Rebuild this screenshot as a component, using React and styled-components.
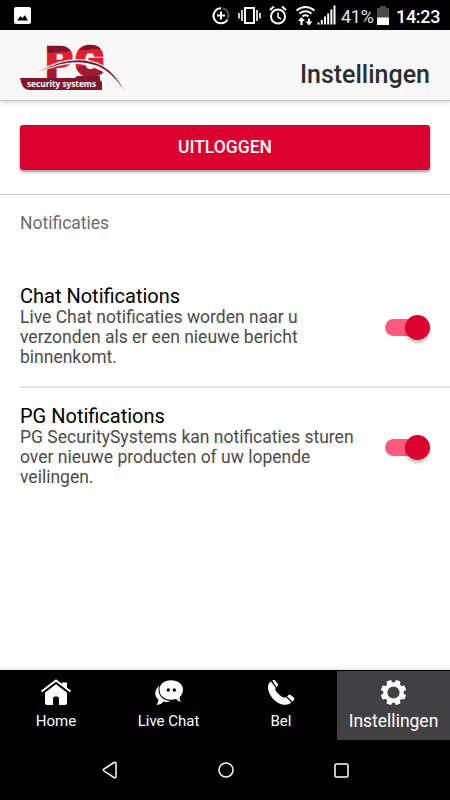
import { useState } from 'react';
import styled, { createGlobalStyle } from 'styled-components';

const GlobalStyle = createGlobalStyle`
  * {
    box-sizing: border-box;
  }

  body {
    margin: 0;
    background: #fff;
    font-family: Roboto, sans-serif;
  }
`;

const Screen = styled.div`
  display: flex;
  flex-direction: column;
  width: 450px;
  height: 800px;
  overflow: hidden;
  background: #fff;
`;

const StatusBar = styled.div`
  display: flex;
  justify-content: space-between;
  flex: none;
  height: 30px;
  padding: 0 10px 0 14px;
  background: #000;
  color: #fff;

  svg {
    display: block;
    flex: none;
  }
`;

const StatusGroup = styled.div`
  display: flex;
  align-items: center;
`;

const Battery = styled.span`
  width: 33px;
  margin: 4px 3px 0 5px;
  font-size: 18px;
  line-height: 26px;
  letter-spacing: -0.3px;
  color: #e4e4e4;
`;

const Clock = styled.span`
  width: 44px;
  margin: 3px 0 0 7px;
  font-size: 18px;
  font-weight: 500;
  line-height: 26px;
  letter-spacing: -0.3px;
  white-space: nowrap;
`;

const Header = styled.header`
  display: flex;
  justify-content: space-between;
  flex: none;
  height: 70px;
  padding: 14px 20px 0;
  background: #f8f8f8;
  box-shadow: 0 1px 1px #c4c4c4, 0 2px 5px rgba(0, 0, 0, 0.18);
`;

const PageTitle = styled.h1`
  margin: 16px 0 0;
  font-size: 25px;
  font-weight: 500;
  line-height: 30px;
  color: #2b2d2f;
`;

const LogoSvg = styled.svg`
  display: block;
  overflow: visible;
`;

const Content = styled.main`
  flex: 1;
`;

const ButtonRow = styled.div`
  padding: 25px 20px 24px;
  border-bottom: 1px solid #cfcfcf;
`;

const Button = styled.button`
  display: block;
  width: 100%;
  height: 45px;
  padding: 0 0 2px;
  border: 0;
  border-radius: 3px;
  background: #dd002e;
  box-shadow: 0 2px 3px rgba(0, 0, 0, 0.4);
  color: #fff;
  font-family: inherit;
  font-size: 17.5px;
  font-weight: 500;
`;

const ListTitle = styled.h2`
  margin: 18px 20px 35px;
  font-size: 17.5px;
  font-weight: 400;
  line-height: 20px;
  color: #6c6c6c;
`;

const Item = styled.div`
  display: flex;
  justify-content: space-between;
  align-items: center;
  height: 120px;
  margin-left: 20px;
  padding: 0 20px 2px 0;
  border-bottom: 2px solid ${(props) => (props.$last ? 'transparent' : '#e3e3e3')};
`;

const ItemTitle = styled.div`
  font-size: 20px;
  line-height: 20px;
  color: #000;
`;

const ItemText = styled.p`
  width: 345px;
  margin: 1px 0 0;
  font-size: 17.5px;
  line-height: 20px;
  white-space: pre-line;
  color: #4b4b4b;
`;

const Toggle = styled.button`
  display: flex;
  align-items: center;
  justify-content: ${(props) => (props.$on ? 'flex-end' : 'flex-start')};
  flex: none;
  width: 45px;
  height: 17px;
  margin-top: 2px;
  padding: 0;
  border: 0;
  border-radius: 9px;
  background: ${(props) => (props.$on ? '#ff5a7e' : '#bdbdbd')};
`;

const Knob = styled.span`
  width: 25px;
  height: 25px;
  flex: none;
  border-radius: 50%;
  background: ${(props) => (props.$on ? '#dd002e' : '#fff')};
  box-shadow: 0 3px 3px rgba(0, 0, 0, 0.25);
`;

const TabBar = styled.nav`
  display: grid;
  grid-template-columns: 112px 113px 112px 113px;
  flex: none;
  height: 72px;
  border-top: 2px solid #f0f0f0;
  background: #000;
`;

const Tab = styled.a`
  display: flex;
  flex-direction: column;
  align-items: center;
  margin-top: 1px;
  padding-top: 8px;
  background: ${(props) => (props.$active ? '#414143' : '#000')};
  color: #fff;
  font-size: ${(props) => (props.$active ? '17.5px' : '15px')};
  line-height: 22px;

  svg {
    display: block;
    margin-bottom: 4px;
  }
`;

const SystemNav = styled.div`
  display: flex;
  justify-content: center;
  align-items: center;
  gap: 100px;
  flex: none;
  height: 60px;
  padding-right: 1px;
  background: #000;
`;

const Logo = () => (
  <LogoSvg width="106" height="47" viewBox="0 0 106 47">
    <defs>
      <linearGradient id="bands" gradientUnits="userSpaceOnUse" x1="0" y1="0" x2="4" y2="46">
        <stop offset="0.25" stopColor="#831329" />
        <stop offset="0.25" stopColor="#e61c2f" />
        <stop offset="0.6" stopColor="#e61c2f" />
        <stop offset="0.6" stopColor="#a31930" />
      </linearGradient>
    </defs>
    <g fill="url(#bands)" stroke="url(#bands)" strokeWidth="2.5" fontFamily="Roboto" fontWeight="900" fontSize="42">
      <text x="26" y="32.500" textLength="27" lengthAdjust="spacingAndGlyphs">P</text>
      <text x="55" y="32" textLength="29" lengthAdjust="spacingAndGlyphs">G</text>
    </g>
    <path d="M0 34H54Q56 34 57 32H80Q79 36 82 38V46H9Q2 46 0 34Z" fill="#85152b" />
    <path d="M18 28Q55 8 82 22Q94 28 104 46Q92 29 78 24Q52 12 18 28Z" fill="#f8f8f8" stroke="#f8f8f8" strokeWidth="2.500" />
    <path d="M18 28Q55 8 82 22Q94 28 104 46Q92 28 78 22Q52 12 18 28Z" fill="#7e1529" />
    <text x="7" y="42.500" textLength="69" lengthAdjust="spacingAndGlyphs" fill="#fff" fontFamily="Open Sans" fontWeight="700" fontSize="9.300">
      security systems
    </text>
  </LogoSvg>
);

const PictureIcon = () => (
  <svg width="17" height="30" viewBox="0 0 17 30">
    <rect y="7" width="17" height="17" rx="2" fill="#fff" />
    <path d="M3 20.5 6.5 16l2 2.2 2.2-3L14 20.5Z" fill="#000" />
  </svg>
);

const StatusIcons = () => (
  <svg width="125" height="30" viewBox="211 0 125 30" fill="none" stroke="#fff" strokeWidth="2">
    <path d="M221 8.200A7.500 7.500 0 1 0 227.500 19.500" />
    <path d="M222.500 8.200A7.500 7.500 0 0 1 228 18.500" stroke="#555" />
    <path d="M217 15.500h8M221 11.500v8" />
    <path d="M245 8h9v15h-9Z" />
    <path d="M242 10v11M257 10v11M239 13v5.500M260 13v5.500" strokeWidth="1.6" />
    <circle cx="278" cy="16.500" r="7" />
    <path d="M278 12.500v4.500l3 2.200" strokeWidth="1.5" />
    <path d="m270 10 4-3.500M286 10l-4-3.500" />
    <path d="M296.500 10.500q9-7 18 0M299.500 13.500q6-4.500 12 0M302.500 16.300q3-2 6 0" />
    <path d="M301.500 25v-5M309 18.500v4" strokeWidth="2.200" />
    <path d="m298 21 3.500-4 3.500 4ZM305.500 21.500l3.500 4 3.500-4Z" fill="#fff" stroke="none" />
    <path d="M318.500 24.500v-2M321.800 24.500v-4.500M325 24.500v-8M328.200 24.500v-11M331.400 24.500v-15M334.500 24.500V5.500" />
  </svg>
);

const BatteryIcon = () => (
  <svg width="12" height="30" viewBox="0 0 12 30">
    <path d="M3 6h6v2h3v10H0V8h3Z" fill="#4b4b4b" />
    <path d="M0 17.500h12V25H0Z" fill="#fff" />
  </svg>
);

const HomeIcon = () => (
  <svg width="32" height="27" viewBox="0 0 32 27" fill="#fff">
    <path d="m1.500 12.500 14.500-11 14.500 11" fill="none" stroke="#fff" strokeWidth="2" />
    <path d="M22 3.500h5v7l-5-3.800ZM5 13.500 16 5.200l11 8.300v10q0 2.500-2.500 2.500H19v-6.500q0-2-2-2h-2q-2 0-2 2V26H7.500Q5 26 5 23.500Z" />
  </svg>
);

const ChatIcon = () => (
  <svg width="30" height="27" viewBox="0 0 30 27" fill="#fff">
    <path d="M5.500 6.500C0 10.500 0 17.500 4.500 20.500q0 3-2 5.500 5-.5 7-3.500 3 .8 6.500 0Z" />
    <path
      d="M17 1.200c-7 0-11.500 4-11.500 9.600s4.500 10 11.500 10q3 0 5-.7 2 2.500 5 3-1.800-2-1.300-5c2-2 3.300-4.300 3.300-7.300 0-5.600-5-9.600-12-9.600Z"
      stroke="#000"
      strokeWidth="2"
      paintOrder="stroke"
    />
    <circle cx="14.300" cy="11" r="1.700" fill="#000" />
    <circle cx="20.300" cy="11" r="1.700" fill="#000" />
  </svg>
);

const PhoneIcon = () => (
  <svg width="28" height="27" viewBox="0 0 28 27" fill="#fff">
    <path d="m5.300 1.500 1.200-.6q.8-.3 1.400.4L11 5q.6.800 0 1.500L9.500 8.200ZM4 2.500l4.600 6.300q-1 1.800.8 4 2.500 3.300 6 5.200 2 1 3.700.2l5.300 5.300q-3 3-8 2.200C8 24.300 2 16.500 1 9.500Q.4 4.500 4 2.500ZM20 17.500l1.600-1.600q.8-.8 1.700-.1l3.700 2.900q.7.700.3 1.500l-1.600 2.600Z" />
  </svg>
);

const GearIcon = () => (
  <svg width="27" height="27" viewBox="-13.500 -13.500 27 27" fill="#fff">
    <circle r="8.200" fill="none" stroke="#fff" strokeWidth="4.200" />
    {[22.5, 67.5, 112.5, 157.5, 202.5, 247.5, 292.5, 337.5].map((angle) => (
      <path key={angle} d="m-2.900-9 .4-3.100q.2-.6 1-.6h3q.8 0 1 .6L2.900-9Z" transform={`rotate(${angle})`} />
    ))}
  </svg>
);

const BackIcon = () => (
  <svg width="17" height="18" viewBox="0 0 17 18">
    <path d="M13 1.500 3 8q-1.500 1 0 2l10 6.500q2 .7 2-1.200V2.700q0-1.900-2-1.200Z" fill="none" stroke="#fff" strokeWidth="1.500" />
  </svg>
);

const CircleIcon = () => (
  <svg width="16" height="16" viewBox="0 0 16 16">
    <circle cx="8" cy="8" r="7" fill="none" stroke="#fff" strokeWidth="1.500" />
  </svg>
);

const SquareIcon = () => (
  <svg width="15" height="15" viewBox="0 0 15 15">
    <rect x="1" y="1" width="13" height="13" rx="1.500" fill="none" stroke="#fff" strokeWidth="1.500" />
  </svg>
);

const tabs = [
  { label: 'Home', icon: <HomeIcon /> },
  { label: 'Live Chat', icon: <ChatIcon /> },
  { label: 'Bel', icon: <PhoneIcon /> },
  { label: 'Instellingen', icon: <GearIcon /> },
];

const Setting = ({ title, children, last }) => {
  const [on, setOn] = useState(true);
  return (
    <Item $last={last}>
      <div>
        <ItemTitle>{title}</ItemTitle>
        <ItemText>{children}</ItemText>
      </div>
      <Toggle $on={on} aria-label={title} onClick={() => setOn(!on)}>
        <Knob $on={on} />
      </Toggle>
    </Item>
  );
};

const App = () => (
  <Screen>
    <GlobalStyle />
    <StatusBar>
      <PictureIcon />
      <StatusGroup>
        <StatusIcons />
        <Battery>41%</Battery>
        <BatteryIcon />
        <Clock>14:23</Clock>
      </StatusGroup>
    </StatusBar>
    <Header>
      <Logo />
      <PageTitle>Instellingen</PageTitle>
    </Header>
    <Content>
      <ButtonRow>
        <Button>UITLOGGEN</Button>
      </ButtonRow>
      <ListTitle>Notificaties</ListTitle>
      <Setting title="Chat Notifications">
        {'Live Chat notificaties worden naar u\nverzonden als er een nieuwe bericht\nbinnenkomt.'}
      </Setting>
      <Setting title="PG Notifications" last>
        {'PG SecuritySystems kan notificaties sturen\nover nieuwe producten of uw lopende\nveilingen.'}
      </Setting>
    </Content>
    <TabBar>
      {tabs.map((tab, i) => (
        <Tab key={tab.label} $active={i === 3}>
          {tab.icon}
          {tab.label}
        </Tab>
      ))}
    </TabBar>
    <SystemNav>
      <BackIcon />
      <CircleIcon />
      <SquareIcon />
    </SystemNav>
  </Screen>
);

export default App;
